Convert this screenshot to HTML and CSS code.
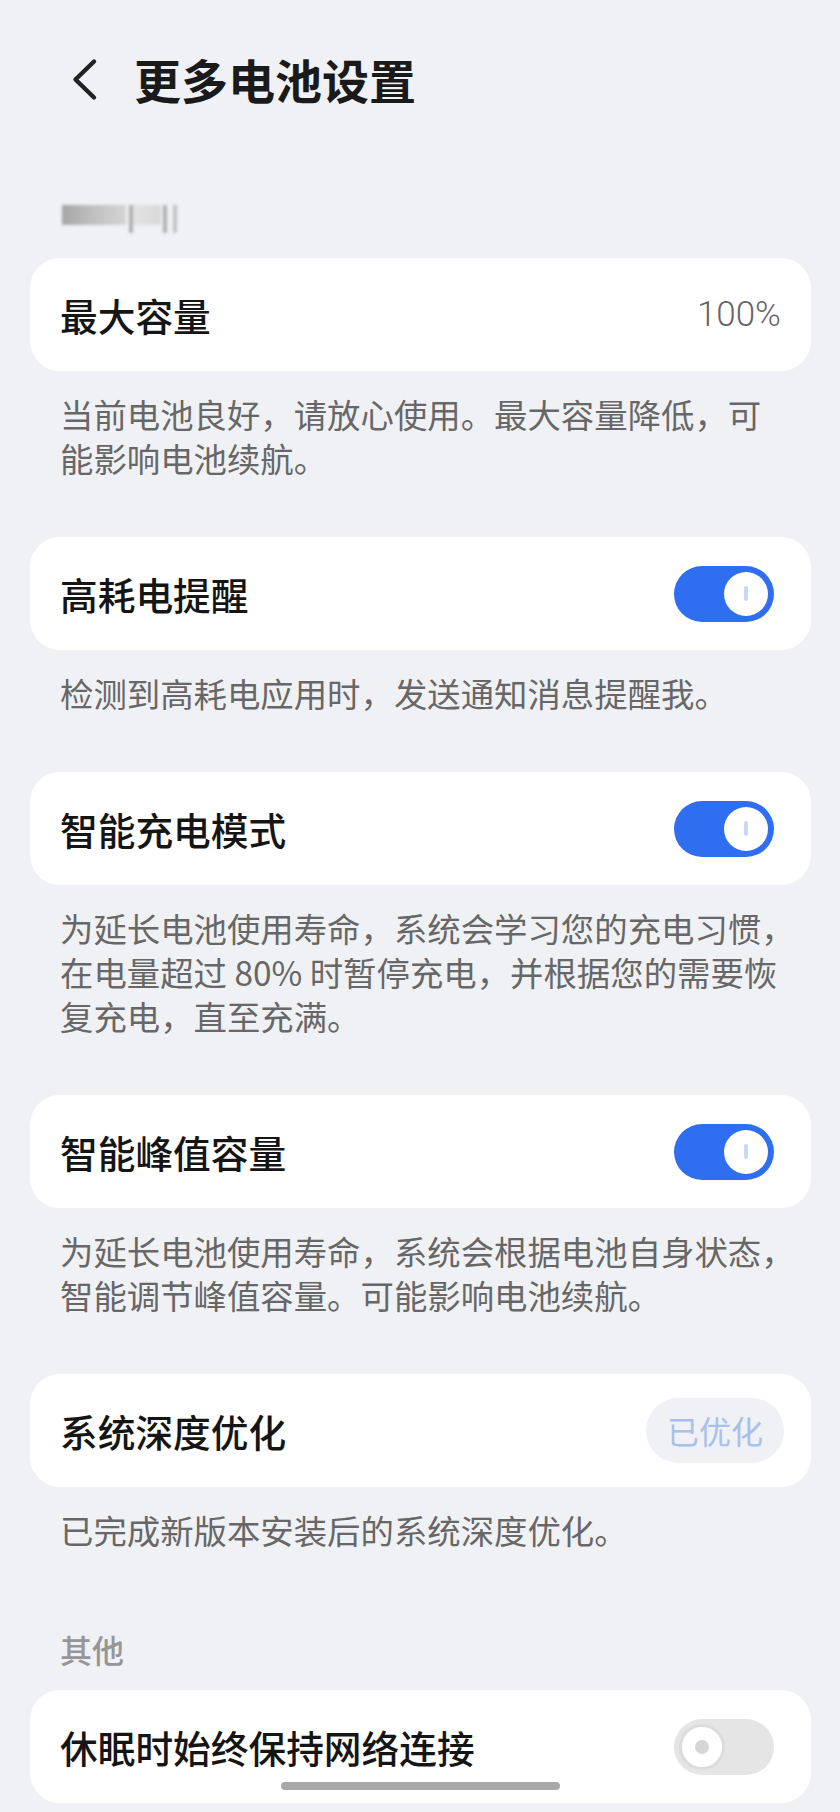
FILE: index.html
```html
<!DOCTYPE html>
<html lang="zh-CN">
<head>
<meta charset="utf-8">
<title>更多电池设置</title>
<link rel="stylesheet" href="styles.css">
</head>
<body>
<div class="page">
  <header class="topbar">
    <svg class="back" width="28" height="44" viewBox="0 0 28 44" aria-hidden="true">
      <path d="M23 4.5 L4.5 22.5 L23 40.5" fill="none" stroke="#222" stroke-width="4.4" stroke-linecap="round" stroke-linejoin="round"/>
    </svg>
    <h1 class="title">更多电池设置</h1>
  </header>

  <div class="blurred" aria-hidden="true">
    <span class="blk"></span>
    <span class="bar bar1"></span>
    <span class="gap"></span>
    <span class="bar bar2"></span>
    <span class="bar bar3"></span>
  </div>

  <section class="group first">
    <div class="card">
      <span class="label">最大容量</span>
      <span class="value">100%</span>
    </div>
    <p class="desc">当前电池良好，请放心使用。最大容量降低，可<br>能影响电池续航。</p>
  </section>

  <section class="group">
    <div class="card">
      <span class="label">高耗电提醒</span>
      <span class="toggle on"><span class="knob"><span class="pill"></span></span></span>
    </div>
    <p class="desc">检测到高耗电应用时，发送通知消息提醒我。</p>
  </section>

  <section class="group">
    <div class="card">
      <span class="label">智能充电模式</span>
      <span class="toggle on"><span class="knob"><span class="pill"></span></span></span>
    </div>
    <p class="desc">为延长电池使用寿命，系统会学习您的充电习惯，<br>在电量超过 80% 时暂停充电，并根据您的需要恢<br>复充电，直至充满。</p>
  </section>

  <section class="group">
    <div class="card">
      <span class="label">智能峰值容量</span>
      <span class="toggle on"><span class="knob"><span class="pill"></span></span></span>
    </div>
    <p class="desc">为延长电池使用寿命，系统会根据电池自身状态，<br>智能调节峰值容量。可能影响电池续航。</p>
  </section>

  <section class="group">
    <div class="card card-badge">
      <span class="label">系统深度优化</span>
      <span class="badge">已优化</span>
    </div>
    <p class="desc">已完成新版本安装后的系统深度优化。</p>
  </section>

  <h2 class="section-title">其他</h2>
  <div class="card card-last">
    <span class="label">休眠时始终保持网络连接</span>
    <span class="toggle off"><span class="knob"><span class="dot"></span></span></span>
  </div>
</div>
<div class="home-indicator"></div>
</body>
</html>
```

FILE: styles.css
```css
html, body {
  margin: 0;
  padding: 0;
}

body {
  background: #f0f1f5;
  font-family: "Noto Sans CJK SC", "Noto Sans", sans-serif;
  color: #1a1a1a;
  position: relative;
  min-height: 1812px;
}

.page {
  padding: 0 29px 0 30px;
}

.topbar {
  display: flex;
  align-items: center;
  height: 64px;
  margin-top: 47px;
  padding-left: 41px;
}

.back {
  display: block;
  flex: none;
}

.title {
  margin: 0 0 0 35px;
  font-size: 47px;
  font-weight: 700;
  line-height: 64px;
  color: #1a1a1a;
  letter-spacing: 0;
}

.blurred {
  display: flex;
  align-items: flex-start;
  height: 28px;
  margin-top: 94px;
  padding-left: 32px;
  filter: blur(1.4px);
  opacity: 0.9;
}

.blurred .blk {
  width: 64px;
  height: 20px;
  background: linear-gradient(90deg, #9d9d9d 0%, #b9b9b9 45%, #d2d2d2 100%);
}

.blurred .bar {
  width: 4px;
  height: 28px;
  background: #a9a9a9;
}

.blurred .bar1 {
  margin-left: 3px;
}

.blurred .gap {
  width: 28px;
  height: 20px;
  background: linear-gradient(90deg, #e2e2e2, #d6d6d6);
}

.blurred .bar2 {
  margin-left: 2px;
}

.blurred .bar3 {
  margin-left: 6px;
  background: #bdbdbd;
}

.group.first {
  margin-top: 25px;
}

.group + .group {
  margin-top: 57px;
}

.card {
  box-sizing: border-box;
  height: 113px;
  background: #ffffff;
  border-radius: 30px;
  display: flex;
  align-items: center;
  justify-content: space-between;
  padding: 0 30px;
}

.card-badge {
  padding-right: 27px;
}

.label {
  font-size: 37.7px;
  font-weight: 500;
  color: #151515;
  line-height: 1;
  white-space: nowrap;
}

.value {
  font-family: Roboto, "Noto Sans", sans-serif;
  font-weight: 300;
  font-size: 35px;
  color: #666666;
  line-height: 1;
}

.desc {
  margin: 21px 0 0;
  padding-left: 30px;
  font-size: 33.4px;
  line-height: 44px;
  color: #676767;
  white-space: nowrap;
}

.toggle {
  box-sizing: border-box;
  width: 100px;
  height: 56px;
  border-radius: 28px;
  margin-right: 7px;
  display: flex;
  align-items: center;
  flex: none;
}

.toggle.on {
  background: #2f6ef1;
  justify-content: flex-end;
  padding-right: 6px;
}

.toggle.on .knob {
  width: 44px;
  height: 44px;
  border-radius: 50%;
  background: #ffffff;
  display: flex;
  align-items: center;
  justify-content: center;
}

.toggle .pill {
  width: 4px;
  height: 15px;
  border-radius: 2px;
  background: #c9d8f5;
}

.toggle.off {
  background: #e5e5e5;
  justify-content: flex-start;
  padding-left: 5px;
}

.toggle.off .knob {
  box-sizing: border-box;
  width: 46px;
  height: 46px;
  border-radius: 50%;
  background: #ffffff;
  border: 3px solid #dcdcdc;
  display: flex;
  align-items: center;
  justify-content: center;
}

.toggle .dot {
  width: 14px;
  height: 14px;
  border-radius: 50%;
  background: #d6d6d6;
}

.badge {
  box-sizing: border-box;
  width: 138px;
  height: 65px;
  border-radius: 33px;
  background: #eff1f5;
  color: #a8c0ea;
  font-size: 32px;
  line-height: 65px;
  text-align: center;
  flex: none;
}

.section-title {
  margin: 75px 0 0;
  padding-left: 30px;
  font-size: 32px;
  font-weight: 500;
  line-height: 44px;
  color: #969696;
}

.card-last {
  margin-top: 19px;
}

.home-indicator {
  position: absolute;
  left: 281px;
  top: 1782px;
  width: 279px;
  height: 8px;
  border-radius: 4px;
  background: #a8a8a8;
}
```
